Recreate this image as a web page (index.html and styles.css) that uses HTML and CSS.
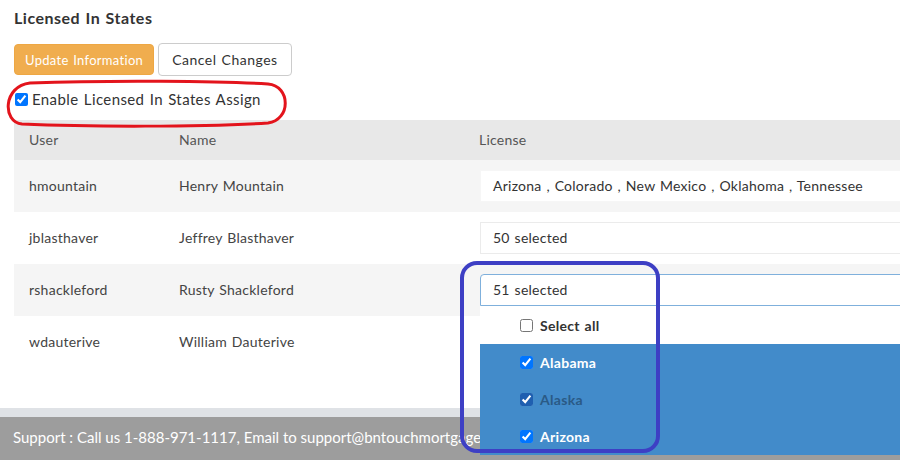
FILE: index.html
```html
<!DOCTYPE html>
<html lang="en">
<head>
    <meta charset="UTF-8">
    <meta name="viewport" content="width=device-width, initial-scale=1.0">
    <title>Licensed In States</title>
    <link rel="stylesheet" href="styles.css">
</head>
<body>
    <div class="main">
        <h2 class="title">Licensed In States</h2>
        <div class="actions">
            <button class="btn btn-update">Update Information</button>
            <button class="btn btn-cancel">Cancel Changes</button>
        </div>
        <label class="enable-row">
            <input type="checkbox" checked>
            Enable Licensed In States Assign
        </label>

        <table class="license-table">
            <colgroup>
                <col class="col-user">
                <col class="col-name">
                <col class="col-license">
            </colgroup>
            <thead>
                <tr>
                    <th>User</th>
                    <th>Name</th>
                    <th>License</th>
                </tr>
            </thead>
            <tbody>
                <tr>
                    <td>hmountain</td>
                    <td>Henry Mountain</td>
                    <td><div class="select-box box-plain">Arizona , Colorado , New Mexico , Oklahoma , Tennessee</div></td>
                </tr>
                <tr>
                    <td>jblasthaver</td>
                    <td>Jeffrey Blasthaver</td>
                    <td><div class="select-box">50 selected</div></td>
                </tr>
                <tr>
                    <td>rshackleford</td>
                    <td>Rusty Shackleford</td>
                    <td class="open-cell">
                        <div class="select-box box-open">51 selected</div>
                        <!-- open multiselect dropdown -->
                        <ul class="dropdown">
                            <li class="opt opt-all"><input type="checkbox"> Select all</li>
                            <li class="opt opt-on"><input type="checkbox" checked> Alabama</li>
                            <li class="opt opt-on opt-hover"><input type="checkbox" checked> Alaska</li>
                            <li class="opt opt-on"><input type="checkbox" checked> Arizona</li>
                        </ul>
                    </td>
                </tr>
                <tr>
                    <td>wdauterive</td>
                    <td>William Dauterive</td>
                    <td></td>
                </tr>
            </tbody>
        </table>
    </div>

    <div class="band"></div>
    <div class="footer">Support : Call us 1-888-971-1117, Email to support@bntouchmortgage.net</div>

    <!-- screenshot annotations -->
    <svg class="marks" width="900" height="460" viewBox="0 0 900 460">
        <path class="mark-red" d="M30 83 C110 80 220 81 268 84 C291 86 291 120 268 123 C200 127 90 127 22 124 C2 122 3 86 30 83 Z"/>
        <rect class="mark-blue" x="462" y="263" width="196" height="188" rx="15" ry="15"/>
    </svg>
</body>
</html>
```

FILE: styles.css
```css
html, body {
    margin: 0;
    height: 460px;
    overflow: hidden;
}
body {
    background: #fff;
    color: #333;
    font-family: Lato, "Noto Sans", sans-serif;
    font-size: 14px;
    letter-spacing: 0.25px;
    word-spacing: 1px;
    display: flex;
    flex-direction: column;
    position: relative;
}
.main {
    flex: 1;
    padding: 8px 0 0 14px;
}
.title {
    margin: 0;
    font-size: 16px;
    line-height: 20px;
    font-weight: 700;
    letter-spacing: 0.5px;
    color: #333;
}
.actions {
    margin-top: 15px;
    display: flex;
    gap: 4px;
    align-items: center;
}
.btn {
    font-family: inherit;
    word-spacing: 1px;
    height: 33px;
    padding: 0 13px;
    border-radius: 4px;
    font-size: 14px;
    letter-spacing: 0.5px;
    cursor: pointer;
}
.btn-update {
    height: 31px;
    background-color: #f0ad4e;
    border: 1px solid #eea743;
    color: #fff;
    font-size: 13px;
    letter-spacing: 0.3px;
    padding: 0 10px;
}
.btn-cancel {
    background-color: #fff;
    border: 1px solid #ccc;
    color: #333;
}
.enable-row {
    margin-top: 12px;
    height: 22px;
    display: flex;
    align-items: center;
    font-size: 15px;
    letter-spacing: 0.4px;
    color: #333;
}
.enable-row input {
    margin: 0 4px 0 1px;
    width: 13px;
    height: 13px;
}
.license-table {
    margin-top: 10px;
    width: 1000px;
    border-collapse: collapse;
    table-layout: fixed;
}
.col-user { width: 150px; }
.col-name { width: 300px; }
.license-table th {
    background-color: #e8e8e8;
    color: #555;
    font-weight: 400;
    text-align: left;
    height: 38px;
    padding: 0 0 2px 15px;
}
.license-table td {
    height: 50px;
    padding: 0 0 2px 15px;
    color: #444;
}
.license-table tbody tr:nth-child(odd) td {
    background-color: #f5f5f5;
}
.license-table td:last-child {
    height: 52px;
    padding: 0 0 0 16px;
}
.select-box {
    box-sizing: border-box;
    height: 32px;
    line-height: 29px;
    padding-left: 12px;
    background: #fff;
    border: 1px solid #ebebeb;
    color: #333;
    white-space: nowrap;
}
.box-plain {
    border-color: #f6f6f6;
}
.box-open {
    border-color: #7fb0dc;
    border-radius: 4px 0 0 0;
}
.open-cell {
    position: relative;
}
.dropdown {
    position: absolute;
    left: 16px;
    top: 42px;
    width: 600px;
    margin: 0;
    padding: 0;
    list-style: none;
    background: #fff;
    z-index: 2;
}
.opt {
    display: flex;
    align-items: center;
    height: 37px;
    padding-left: 40px;
    font-weight: 700;
    letter-spacing: 0.3px;
}
.opt input {
    margin: 0 7px 0 0;
    width: 13px;
    height: 13px;
}
.opt-all {
    height: 38px;
    color: #333;
}
.opt-on {
    background-color: #428bca;
    color: #fff;
}
.opt-hover {
    color: #2a5a86;
}
.opt-hover input {
    accent-color: #1f5fb0;
}
.band {
    height: 9px;
    background-color: #dfe2e6;
}
.footer {
    height: 43px;
    line-height: 41px;
    background-color: #9d9d9d;
    color: #fff;
    font-size: 15px;
    letter-spacing: 0;
    word-spacing: 0;
    padding-left: 13px;
    white-space: nowrap;
}
.marks {
    position: absolute;
    left: 0;
    top: 0;
    z-index: 5;
    pointer-events: none;
}
.mark-red {
    fill: none;
    stroke: #e3141c;
    stroke-width: 3;
}
.mark-blue {
    fill: none;
    stroke: #3d3fc4;
    stroke-width: 4;
}
```
